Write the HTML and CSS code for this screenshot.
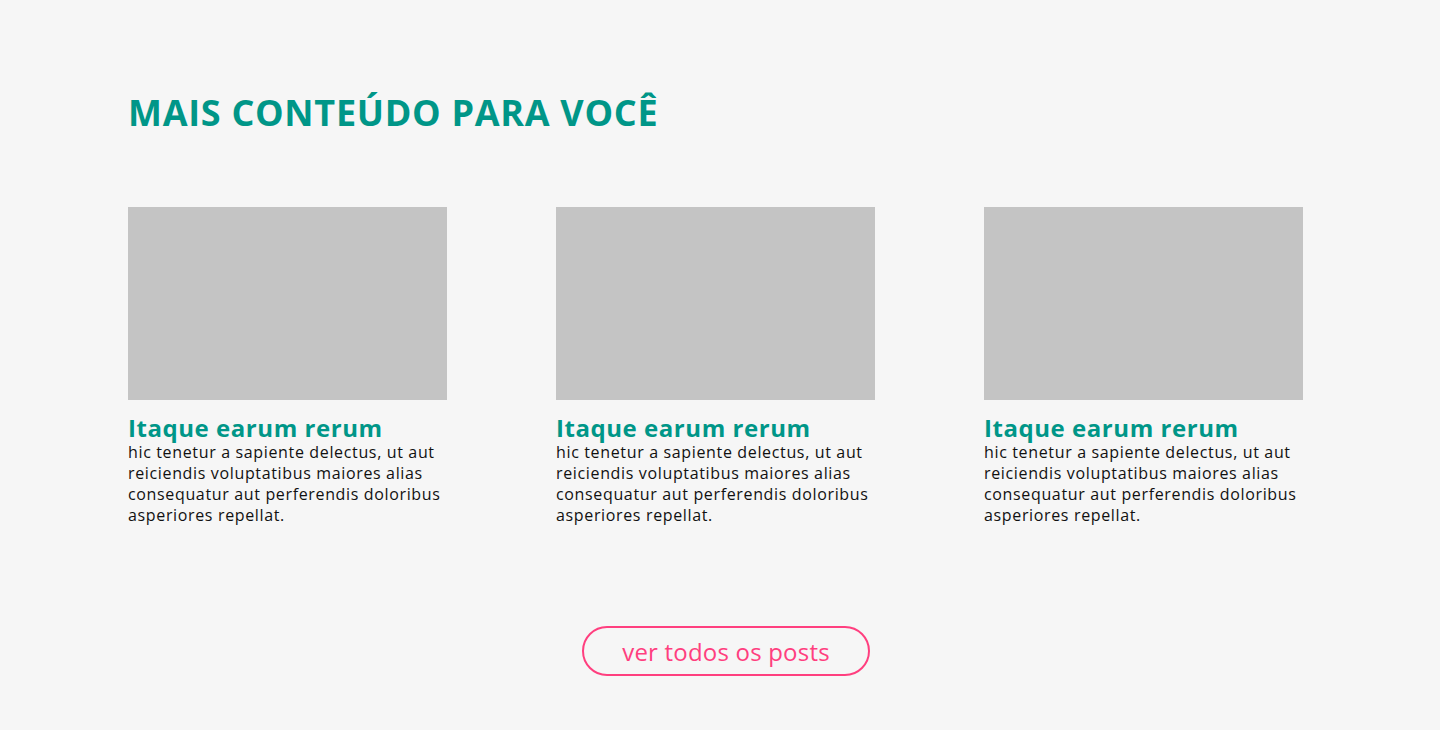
FILE: index.html
```html
<!DOCTYPE html>
<html lang="pt">
<head>
<meta charset="utf-8">
<title>Mais conteúdo para você</title>
<link rel="stylesheet" href="styles.css">
</head>
<body>
<section class="more">
  <h2 class="more-title">MAIS CONTEÚDO PARA VOCÊ</h2>
  <div class="cards">
    <article class="card">
      <div class="card-img"></div>
      <h3 class="card-title">Itaque earum rerum</h3>
      <p class="card-text">hic tenetur a sapiente delectus, ut aut reiciendis voluptatibus maiores alias consequatur aut perferendis doloribus asperiores repellat.</p>
    </article>
    <article class="card">
      <div class="card-img"></div>
      <h3 class="card-title">Itaque earum rerum</h3>
      <p class="card-text">hic tenetur a sapiente delectus, ut aut reiciendis voluptatibus maiores alias consequatur aut perferendis doloribus asperiores repellat.</p>
    </article>
    <article class="card">
      <div class="card-img"></div>
      <h3 class="card-title">Itaque earum rerum</h3>
      <p class="card-text">hic tenetur a sapiente delectus, ut aut reiciendis voluptatibus maiores alias consequatur aut perferendis doloribus asperiores repellat.</p>
    </article>
  </div>
  <div class="actions">
    <a class="btn-outline" href="#">ver todos os posts</a>
  </div>
</section>
</body>
</html>
```

FILE: styles.css
```css
html, body {
  margin: 0;
  padding: 0;
  background: #f6f6f6;
}
body {
  font-family: "Open Sans", "Noto Sans", sans-serif;
  color: #111;
}
.more {
  padding: 92px 128px 0 128px;
  height: 638px;
}
.more-title {
  margin: 0;
  font-size: 36px;
  line-height: 42px;
  font-weight: 700;
  letter-spacing: 0.7px;
  color: #009688;
}
.cards {
  margin-top: 73px;
  display: grid;
  grid-template-columns: repeat(3, 319px);
  column-gap: 109px;
}
.card-img {
  height: 193px;
  background: #c4c4c4;
}
.card-title {
  margin: 14px 0 0 0;
  font-size: 24px;
  line-height: 28px;
  font-weight: 700;
  letter-spacing: 0.55px;
  color: #009688;
}
.card-text {
  margin: 0;
  font-size: 16px;
  line-height: 21px;
  letter-spacing: 0.65px;
  color: #111;
}
.actions {
  margin-top: 100px;
  display: flex;
  justify-content: center;
  padding-left: 12px;
}
.btn-outline {
  box-sizing: border-box;
  width: 288px;
  height: 50px;
  border: 2px solid #ff3f7f;
  border-radius: 25px;
  display: flex;
  align-items: center;
  justify-content: center;
  font-size: 24px;
  letter-spacing: 0.2px;
  color: #ff3f7f;
  text-decoration: none;
}
```
